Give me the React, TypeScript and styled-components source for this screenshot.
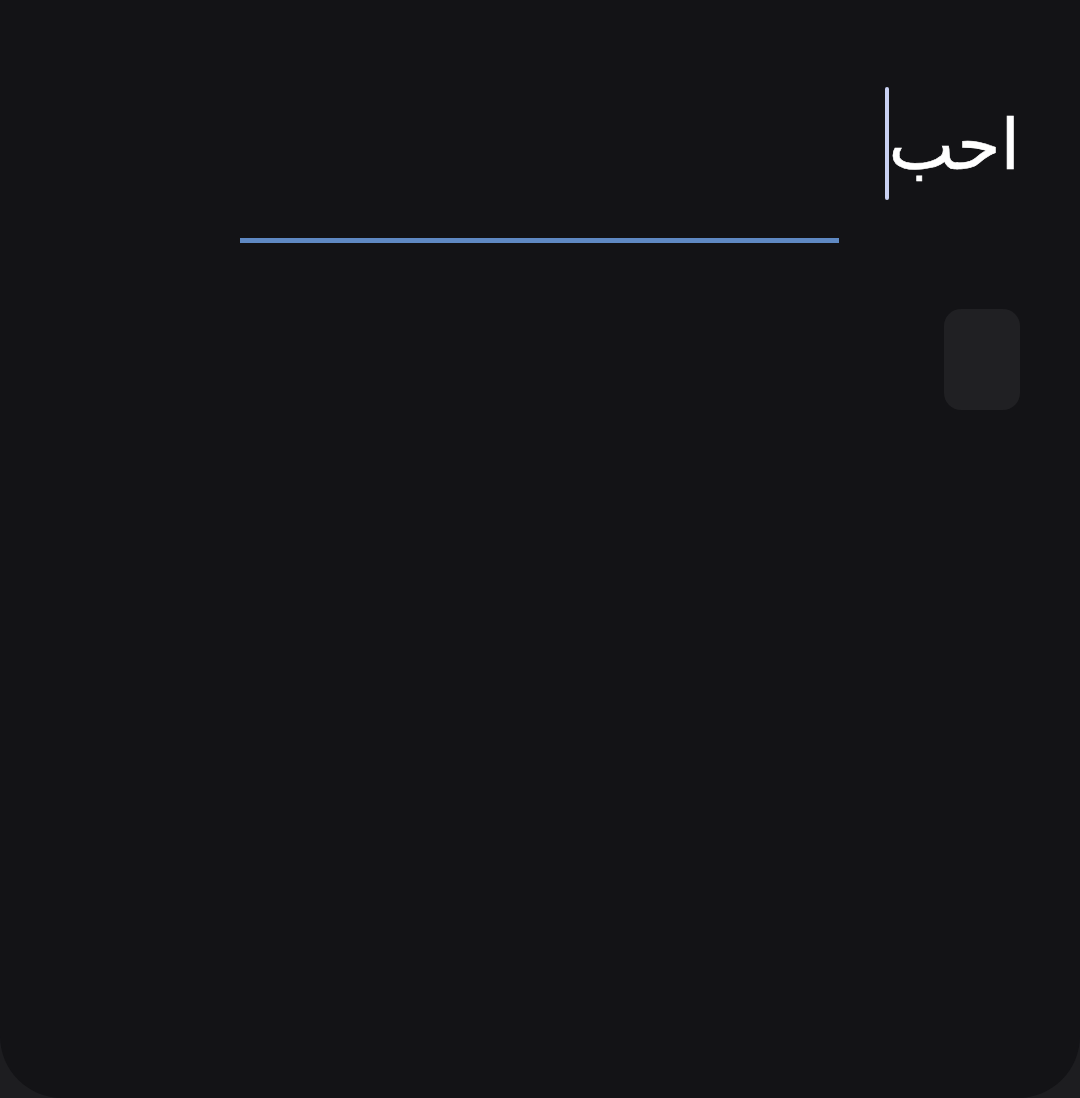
import React from "react";
import styled, { createGlobalStyle } from "styled-components";

const Global = createGlobalStyle`
  html, body {
    margin: 0;
    padding: 0;
    background: #1d1d20;
  }
  #root {
    height: 1098px;
  }
`;

const Panel = styled.div`
  height: 1098px;
  box-sizing: border-box;
  background: #131316;
  border-radius: 0 0 62px 62px;
  display: flex;
  flex-direction: column;
  padding: 87px 60px 0 0;
`;

const InputRow = styled.div`
  direction: rtl;
  display: flex;
  align-items: flex-start;
  height: 113px;
`;

const Typed = styled.span`
  font-family: "DejaVu Sans", "Noto Sans", sans-serif;
  font-size: 70px;
  line-height: 113px;
  color: #ffffff;
  margin-top: 2px;
  -webkit-text-stroke: 0.6px #ffffff;
`;

const Caret = styled.span`
  width: 4px;
  height: 113px;
  background: #c9d1f2;
  border-radius: 2px;
`;

const Underline = styled.div`
  height: 5px;
  background: #5f89c3;
  margin: 38px 181px 0 240px;
`;

const TileRow = styled.div`
  display: flex;
  justify-content: flex-end;
  margin-top: 66px;
`;

const Tile = styled.div`
  width: 76px;
  height: 101px;
  border-radius: 17px;
  background: #202023;
`;

export default function App() {
  return (
    <>
      <Global />
      <Panel>
        <InputRow>
          <Typed>احب</Typed>
          <Caret />
        </InputRow>
        <Underline />
        <TileRow>
          <Tile />
        </TileRow>
      </Panel>
    </>
  );
}
